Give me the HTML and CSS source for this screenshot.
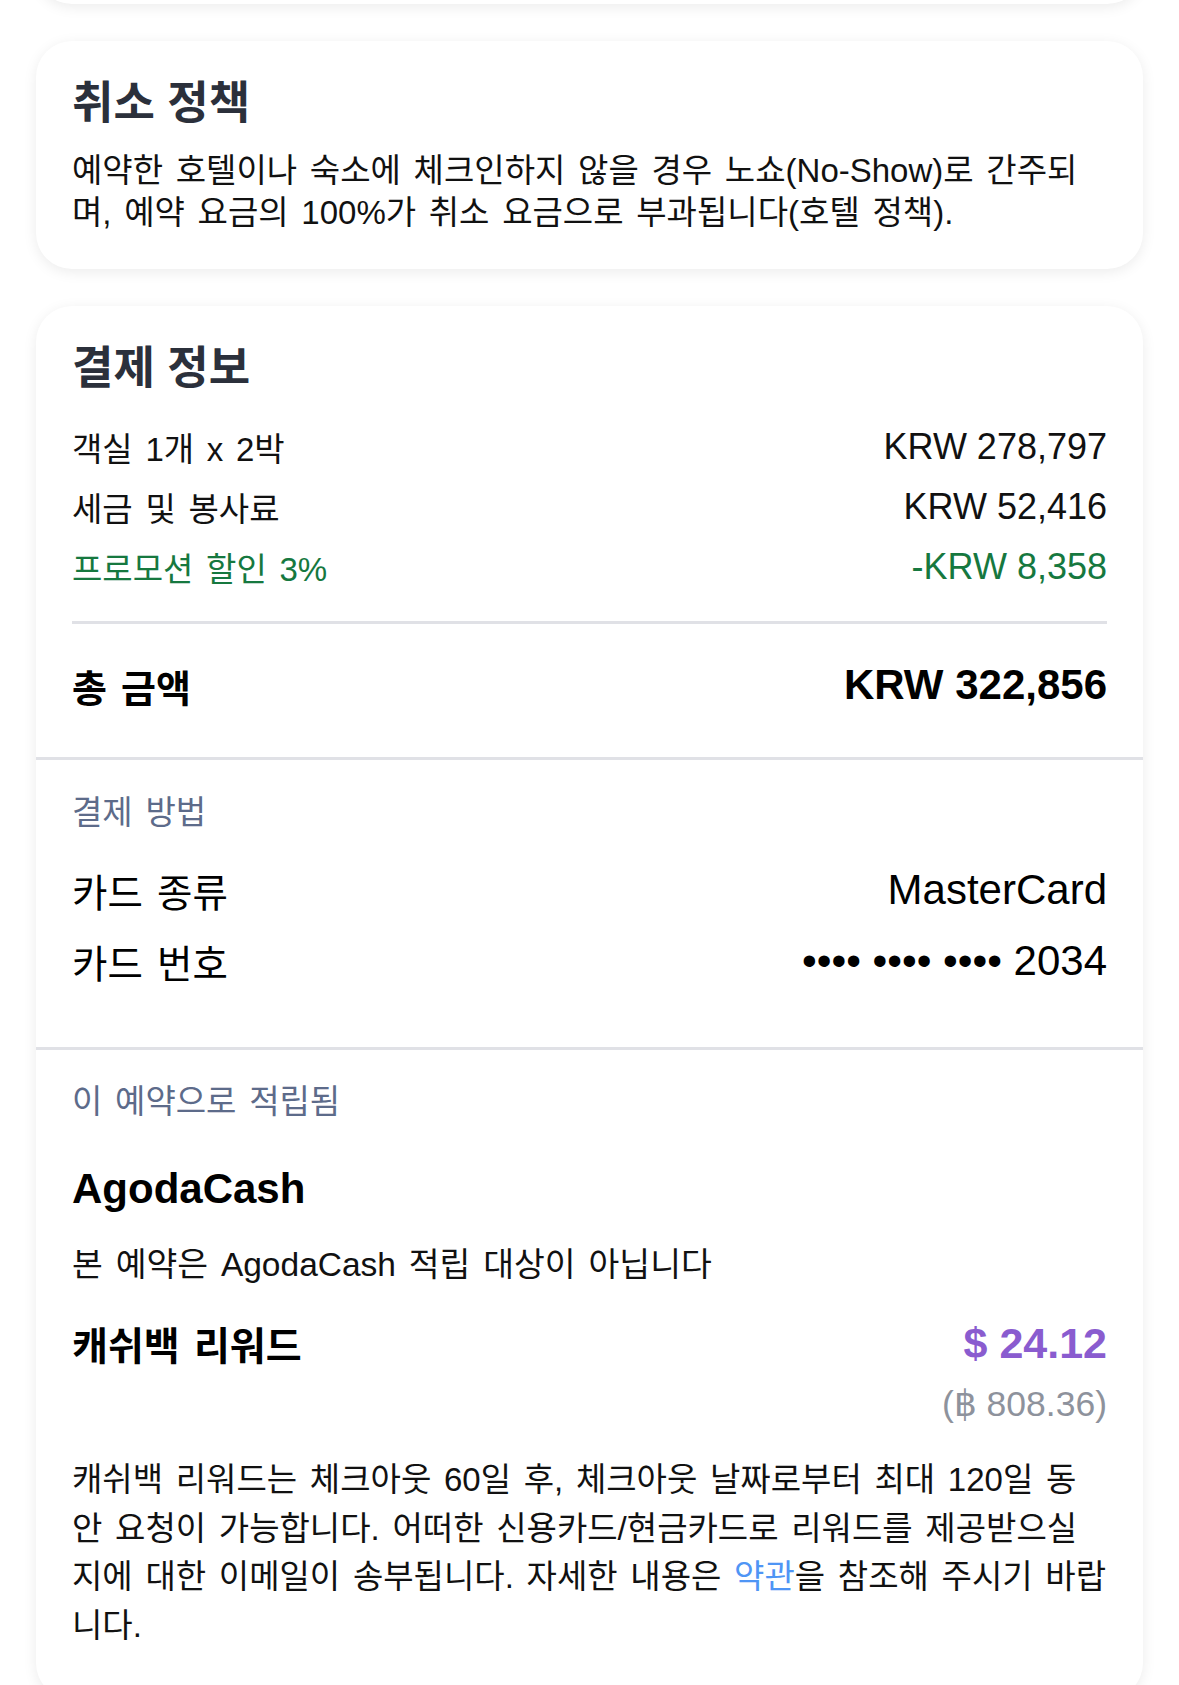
FILE: index.html
```html
<!DOCTYPE html>
<html lang="ko">
<head>
    <meta charset="UTF-8">
    <meta name="viewport" content="width=device-width, initial-scale=1.0">
    <title>예약 상세</title>
    <link rel="stylesheet" href="styles.css">
</head>
<body>
    <div class="screen">
        <!-- 위쪽에 걸쳐 보이는 이전 카드 -->
        <div class="card card-peek"></div>

        <div class="card">
            <div class="card-body">
                <h2 class="card-title">취소 정책</h2>
                <p class="policy-text">예약한 호텔이나 숙소에 체크인하지 않을 경우 노쇼(No-Show)로 간주되며, 예약 요금의 100%가 취소 요금으로 부과됩니다(호텔 정책).</p>
            </div>
        </div>

        <div class="card">
            <div class="card-body summary">
                <h2 class="card-title">결제 정보</h2>
                <div class="price-row">
                    <span>객실 1개 x 2박</span>
                    <span class="price">KRW 278,797</span>
                </div>
                <div class="price-row">
                    <span>세금 및 봉사료</span>
                    <span class="price">KRW 52,416</span>
                </div>
                <div class="price-row discount">
                    <span>프로모션 할인 3%</span>
                    <span class="price">-KRW 8,358</span>
                </div>
                <div class="total-row">
                    <span class="total-label">총 금액</span>
                    <span class="total-price">KRW 322,856</span>
                </div>
            </div>

            <div class="card-section payment">
                <div class="section-label">결제 방법</div>
                <div class="pay-row">
                    <span>카드 종류</span>
                    <span class="pay-value">MasterCard</span>
                </div>
                <div class="pay-row">
                    <span>카드 번호</span>
                    <span class="pay-value">•••• •••• •••• 2034</span>
                </div>
            </div>

            <div class="card-section rewards">
                <div class="section-label">이 예약으로 적립됨</div>
                <h3 class="reward-title">AgodaCash</h3>
                <p class="reward-note">본 예약은 AgodaCash 적립 대상이 아닙니다</p>
                <div class="cashback-row">
                    <h3 class="cashback-title">캐쉬백 리워드</h3>
                    <span class="cashback-amount">$ 24.12</span>
                </div>
                <div class="cashback-local">(฿ 808.36)</div>
                <p class="cashback-text">캐쉬백 리워드는 체크아웃 60일 후, 체크아웃 날짜로부터 최대 120일 동<br>안 요청이 가능합니다. 어떠한 신용카드/현금카드로 리워드를 제공받으실<br>지에 대한 이메일이 송부됩니다. 자세한 내용은 <a href="#" class="link">약관</a>을 참조해 주시기 바랍<br>니다.</p>
            </div>
        </div>
    </div>
</body>
</html>
```

FILE: styles.css
```css
* {
    box-sizing: border-box;
}

body {
    margin: 0;
    background-color: #fff;
    font-family: "Liberation Sans", "Noto Sans CJK KR", sans-serif;
    word-spacing: 3.5px;
    color: #111;
}

.screen {
    height: 100vh;
    overflow: hidden;
    padding: 0 36px;
    display: flex;
    flex-direction: column;
    gap: 37px;
}

.card {
    flex-shrink: 0;
    background-color: #fff;
    border-radius: 36px;
    box-shadow: 0 3px 14px rgba(0, 0, 0, 0.08);
    overflow: hidden;
}

.card-peek {
    height: 80px;
    margin-top: -76px;
}

.card-body {
    padding: 36px;
}

.card-title {
    margin: 0 0 19px;
    font-size: 45px;
    line-height: 54px;
    font-weight: 700;
    word-spacing: normal;
    color: #2b303b;
}

.policy-text {
    margin: 0;
    font-size: 33px;
    line-height: 41.5px;
}

/* 결제 정보 */
.summary {
    padding-bottom: 47px;
}

.summary .card-title {
    margin-bottom: 21px;
}

.price-row {
    display: flex;
    justify-content: space-between;
    align-items: center;
    height: 60px;
    font-size: 33px;
}

.price {
    font-size: 36px;
    word-spacing: normal;
}

.discount {
    color: #16783f;
}

.total-row {
    display: flex;
    justify-content: space-between;
    align-items: center;
    margin-top: 24px;
    padding-top: 36px;
    height: 89px;
    border-top: 3px solid #e0e1e6;
    font-weight: 700;
    color: #000;
}

.total-label {
    font-size: 38px;
}

.total-price {
    font-size: 42px;
    word-spacing: normal;
}

.card-section {
    border-top: 3px solid #e0e1e6;
    padding: 33px 36px 49px;
}

.payment {
    padding-bottom: 51px;
}

.section-label {
    font-size: 33px;
    line-height: 40px;
    color: #5d6b8a;
    margin-bottom: 21px;
}

.pay-row {
    display: flex;
    justify-content: space-between;
    align-items: center;
    height: 71px;
    font-size: 38.5px;
    color: #000;
}

.pay-value {
    font-size: 42px;
    word-spacing: normal;
}

/* 적립 */
.rewards {
    padding-top: 32px;
}

.rewards .section-label {
    margin-bottom: 42px;
}

.reward-title {
    margin: 0;
    font-size: 42px;
    line-height: 50px;
    font-weight: 700;
    color: #000;
}

.reward-note {
    margin: 30px 0 0;
    font-size: 33.5px;
    line-height: 42px;
}

.cashback-row {
    display: flex;
    justify-content: space-between;
    align-items: center;
    margin-top: 32px;
    height: 50px;
}

.cashback-title {
    margin: 0;
    font-size: 39px;
    font-weight: 700;
    color: #000;
}

.cashback-amount {
    font-size: 43px;
    font-weight: 700;
    word-spacing: normal;
    color: #8a5ccf;
}

.cashback-local {
    margin-top: 16px;
    text-align: right;
    font-size: 35.5px;
    line-height: 40px;
    word-spacing: normal;
    color: #8e929c;
}

.cashback-text {
    margin: 32px 0 0;
    font-size: 33px;
    line-height: 48.5px;
}

.link {
    color: #4f95f5;
    text-decoration: none;
}
```
